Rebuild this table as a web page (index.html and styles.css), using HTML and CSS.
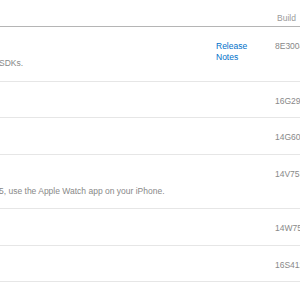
FILE: index.html
```html
<!DOCTYPE html>
<html>
<head>
<meta charset="utf-8">
<link rel="stylesheet" href="styles.css">
</head>
<body>
<div class="table">
  <div class="row head">
    <div class="cell desc"></div>
    <div class="cell notes"></div>
    <div class="cell build">Build</div>
  </div>
  <div class="row">
    <div class="cell desc"><div class="title"></div><div class="text">SDKs.</div></div>
    <div class="cell notes"><a class="link" href="#">Release Notes</a></div>
    <div class="cell build">8E3004b</div>
  </div>
  <div class="row">
    <div class="cell desc"></div>
    <div class="cell notes"></div>
    <div class="cell build">16G29</div>
  </div>
  <div class="row">
    <div class="cell desc"></div>
    <div class="cell notes"></div>
    <div class="cell build">14G60</div>
  </div>
  <div class="row">
    <div class="cell desc"><div class="title"></div><div class="text">5, use the Apple Watch app on your iPhone.</div></div>
    <div class="cell notes"></div>
    <div class="cell build">14V753</div>
  </div>
  <div class="row">
    <div class="cell desc"></div>
    <div class="cell notes"></div>
    <div class="cell build">14W756</div>
  </div>
  <div class="row">
    <div class="cell desc"></div>
    <div class="cell notes"></div>
    <div class="cell build">16S4123</div>
  </div>
</div>
</body>
</html>
```

FILE: styles.css
```css
html, body {
  margin: 0;
  padding: 0;
  background: #ffffff;
  overflow: hidden;
}
body {
  font-family: "Liberation Sans", Arial, sans-serif;
  font-size: 8.5px;
  line-height: 11px;
  color: #888888;
}
.table {
  margin-left: -1px;
  width: 340px;
}
.row {
  display: grid;
  grid-template-columns: 217px 59px 1fr;
  padding: 14px 0 10.5px;
  border-bottom: 1px solid #e6e6e6;
}
.row.head {
  padding: 13px 0 2px;
  border-bottom: 1px solid #b5b5b5;
  color: #9a9a9a;
}
.head .build {
  padding-left: 2px;
}
.cell {
  white-space: nowrap;
}
.notes {
  white-space: normal;
  padding-right: 15px;
}
.title {
  height: 16px;
}
.text {
  line-height: 13px;
}
.link {
  color: #0070c9;
  text-decoration: none;
}
```
